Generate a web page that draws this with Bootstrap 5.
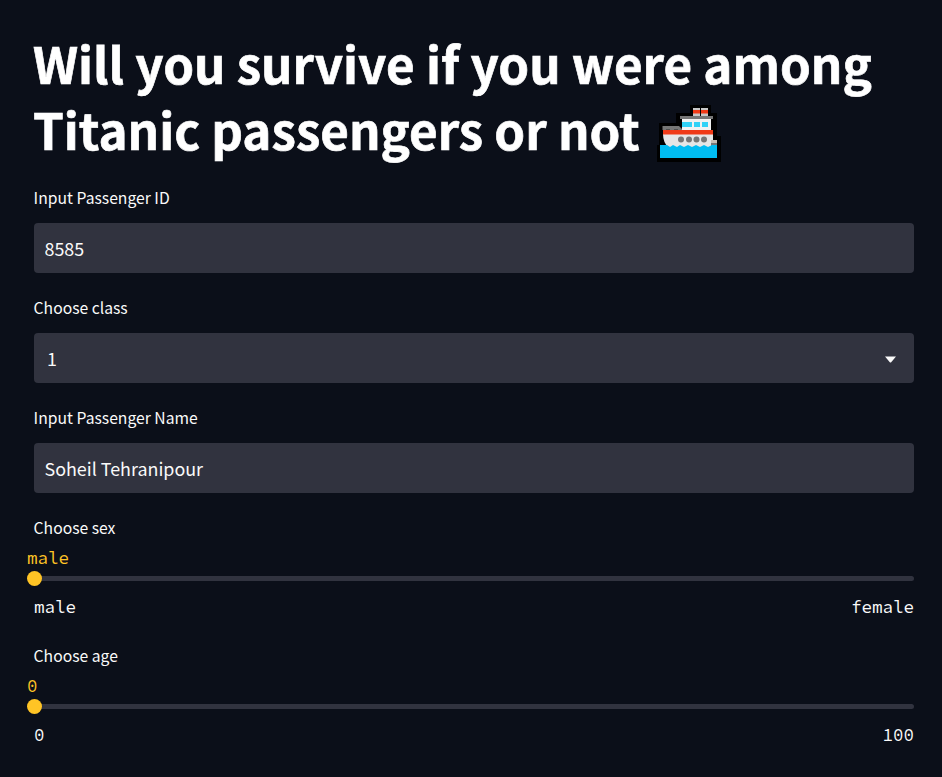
<!DOCTYPE html>
<html lang="en" data-bs-theme="dark">
<head>
<meta charset="utf-8">
<meta name="viewport" content="width=device-width, initial-scale=1">
<title>Titanic survival</title>
<link href="https://cdn.jsdelivr.net/npm/bootstrap@5.3.0/dist/css/bootstrap.min.css" rel="stylesheet">
<style>
body{background:#0b0f19;color:#fafafa;font-family:"Source Sans Pro","Noto Sans CJK SC","Open Sans",sans-serif;overflow:hidden}
.page{padding:30px 28px 0 34px}
.title{font-size:49.3px;line-height:66px;font-weight:700;margin:0 0 25px -1px;white-space:nowrap;-webkit-text-stroke:.7px #fafafa}
.ship{width:64px;height:57px;vertical-align:-12px;margin-left:6px}
.field{height:110px}
.field-label{display:block;font-size:15.7px;line-height:22px;height:36px;margin:0 0 0 -.4px}
.field .form-control{height:50px;background:#31333f;border:0;border-radius:4px;color:#fafafa;font-size:17.9px;line-height:26px;padding:12px 10.5px}
.field .picker{padding:12px 18px 12px 13px}
.slide{height:128px}
.slide .field-label{height:24px}
.mono{font-family:"Source Code Pro","Liberation Mono",monospace;font-size:17.5px;line-height:20px}
.current{color:#ffc425;margin:0 0 6px -7px;padding-top:7px;height:29px}
.rail{height:5px;border-radius:3px;background:#31333f}
.knob{width:15px;height:15px;border-radius:50%;background:#ffc425;left:-7px;top:-5px}
.caret{margin-top:2px}
</style>
<script src="https://cdn.jsdelivr.net/npm/bootstrap@5.3.0/dist/js/bootstrap.bundle.min.js"></script>
</head>
<body>
<main class="page">
<h1 class="title">Will you survive if you were among<br>Titanic passengers or not
<svg class="ship" viewBox="0 0 64 57" role="img" aria-label="Ship"><path fill="#000" d="M33 0h21v8h6v23h4v26H0V40h2V18h17V8h14z"/><path fill="#c8c8c8" d="M36 3h7v9h-7zM44 3h7v9h-7z"/><path fill="#f03a17" d="M36 5h7v3.500h-7zM44 5h7v3.500h-7z"/><path fill="#767676" d="M23 11h33v3H23zM5.500 21H22l4 4H5.500z"/><path fill="#f2f2f2" d="M25 14h29v11H25z"/><path fill="#31d2f7" d="M25 17h10v5H25zM37 17h6v5h-6zM45 17h6v5h-6z"/><path fill="#505050" d="M9 24h4v1H9zM17 24h4v1h-4z"/><path fill="#e6e6e6" d="M6 29h50v14H12q-6-5-6-14z"/><path fill="#c8bdb5" d="M54 35h6v3h-6z"/><path fill="#767676" d="M54 38h6v3h-6z"/><path fill="#f03a17" d="M6 25h50v4.500H6z"/><g fill="#767676"><circle cx="24" cy="34.500" r="3"/><circle cx="32" cy="34.500" r="3"/><circle cx="39.500" cy="34.500" r="3"/><circle cx="47" cy="34.500" r="3"/></g><path fill="#00bcf2" d="M3 40h7l3 2 3-2 4 2 3-2 4 2 4-2 4 2 4-2 4 2 4-2 4 2 4-2h5v13H3z"/></svg></h1>
<div class="field"><label class="field-label" for="pid">Input Passenger ID</label><input id="pid" class="form-control" value="8585"></div>
<div class="field"><span class="field-label">Choose class</span><div class="form-control picker d-flex align-items-center justify-content-between"><span>1</span><svg class="caret" width="11" height="7" viewBox="0 0 11 7"><path fill="#fafafa" d="M0 .4h11L6.200 6.200q-.7.700-1.400 0z"/></svg></div></div>
<div class="field"><label class="field-label" for="name">Input Passenger Name</label><input id="name" class="form-control" value="Soheil Tehranipour"></div>
<div class="slide"><span class="field-label">Choose sex</span><div class="mono current">male</div><div class="rail position-relative"><div class="knob position-absolute"></div></div><div class="mono d-flex justify-content-between pt-3"><span>male</span><span>female</span></div></div>
<div class="slide"><span class="field-label">Choose age</span><div class="mono current">0</div><div class="rail position-relative"><div class="knob position-absolute"></div></div><div class="mono d-flex justify-content-between pt-3"><span>0</span><span>100</span></div></div>
</main>
</body>
</html>
